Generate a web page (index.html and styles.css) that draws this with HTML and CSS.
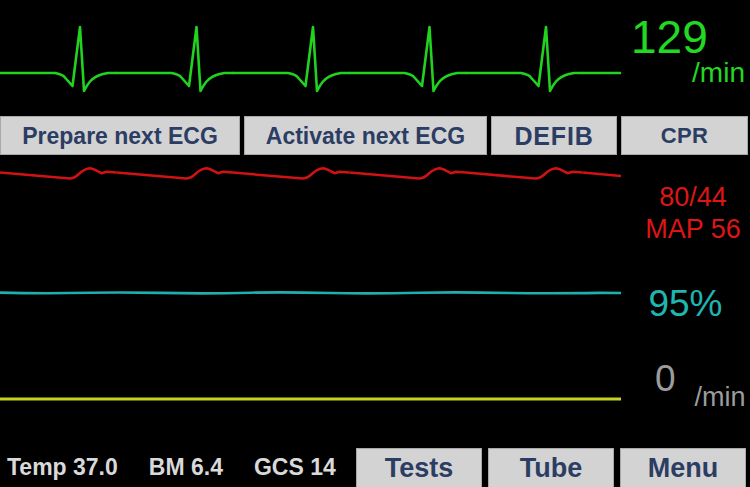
FILE: index.html
```html
<!DOCTYPE html>
<html>
<head>
<meta charset="utf-8">
<link rel="stylesheet" href="styles.css">
</head>
<body>
<div class="monitor">
  <section class="row ecg-row">
    <svg class="trace" width="621" height="116" viewBox="0 0 621 116">
      <defs>
        <path id="beat" d="M0,73 H55 Q62,74.5 64,76.5 L72.5,86 L80,27 L84,91 Q87,85 90,81.5 Q95,76 103,74 L108,73 H116.5"/>
      </defs>
      <g class="ecg-line">
        <use href="#beat" x="0"/>
        <use href="#beat" x="116.5"/>
        <use href="#beat" x="233"/>
        <use href="#beat" x="349.5"/>
        <use href="#beat" x="466"/>
        <use href="#beat" x="582.5"/>
      </g>
    </svg>
    <div class="val hr-val">
      <span class="hr-num">129</span>
      <span class="hr-unit">/min</span>
    </div>
  </section>

  <nav class="btn-row">
    <button class="btn btn-ecg">Prepare next ECG</button>
    <button class="btn btn-ecg">Activate next ECG</button>
    <button class="btn btn-defib">DEFIB</button>
    <button class="btn btn-cpr">CPR</button>
  </nav>

  <section class="row bp-row">
    <svg class="trace" width="621" height="104" viewBox="0 154 621 104">
      <defs>
        <path id="pulse" d="M0,172.6 L70,178.6 Q75,178 80,173 Q85,168.5 90,168.2 Q94,168.8 101.5,173.2 L106.5,171.7 L116.5,172.6"/>
      </defs>
      <g class="bp-line">
        <use href="#pulse" x="0"/>
        <use href="#pulse" x="116.5"/>
        <use href="#pulse" x="233"/>
        <use href="#pulse" x="349.5"/>
        <use href="#pulse" x="466"/>
        <use href="#pulse" x="582.5"/>
      </g>
    </svg>
    <div class="val bp-val">
      <span class="bp-line1">80/44</span>
      <span class="bp-line2">MAP 56</span>
    </div>
  </section>

  <section class="row spo2-row">
    <svg class="trace" width="621" height="82" viewBox="0 258 621 82">
      <path class="spo2-line" d="M0,292.6 C30,293.4 60,293.4 90,292.8 C110,292.3 130,292.3 160,292.9 C190,293.5 220,293.5 250,292.7 C270,292.2 300,292.3 330,293 C360,293.6 390,293.4 420,292.7 C450,292.2 480,292.4 510,293 C540,293.5 570,293.3 600,292.9 L621,293"/>
    </svg>
    <div class="val spo2-val">95%</div>
  </section>

  <section class="row resp-row">
    <svg class="trace" width="621" height="108" viewBox="0 340 621 108">
      <path class="resp-line" d="M0,399 H621"/>
    </svg>
    <div class="val resp-val">
      <span class="rr-num">0</span><span class="rr-unit">/min</span>
    </div>
  </section>

  <footer class="bottom">
    <div class="stats">
      <span class="stat">Temp 37.0</span>
      <span class="stat">BM 6.4</span>
      <span class="stat">GCS 14</span>
    </div>
    <div class="bottom-btns">
      <button class="btn btn-big">Tests</button>
      <button class="btn btn-big">Tube</button>
      <button class="btn btn-big">Menu</button>
    </div>
  </footer>
</div>
</body>
</html>
```
FILE: styles.css
```css
* { box-sizing: border-box; }
html, body {
  margin: 0;
  padding: 0;
  background: #000;
}
body {
  width: 750px;
  height: 487px;
  overflow: hidden;
  font-family: "Liberation Sans", Arial, sans-serif;
}
.monitor {
  display: flex;
  flex-direction: column;
  width: 750px;
  height: 487px;
}
.row {
  display: flex;
  flex: none;
}
.trace {
  display: block;
  flex: none;
}
.val {
  flex: 1;
  display: flex;
  flex-direction: column;
}

/* ECG */
.ecg-row { height: 116px; }
.ecg-line {
  fill: none;
  stroke: #21d21f;
  stroke-width: 2.6;
  stroke-linejoin: round;
  stroke-linecap: round;
}
.hr-val { color: #22d822; }
.hr-num {
  font-size: 46px;
  line-height: 46px;
  padding-top: 14px;
  padding-left: 10px;
}
.hr-unit {
  font-size: 28px;
  line-height: 28px;
  margin-top: -1px;
  align-self: flex-end;
  padding-right: 5px;
}

/* Buttons */
.btn-row {
  display: grid;
  grid-template-columns: 240px 243px 126px 127px;
  column-gap: 4px;
  height: 38px;
  flex: none;
}
.btn {
  margin: 0;
  padding: 0;
  background: #d3d3d3;
  border: 1px solid #a8a8a8;
  color: #2c3d64;
  font-family: "Liberation Sans", Arial, sans-serif;
  font-weight: bold;
  text-align: center;
}
.btn-ecg { font-size: 23px; line-height: 36px; padding-top: 1px; }
.btn-defib { font-size: 25px; line-height: 36px; letter-spacing: 0.8px; }
.btn-cpr { font-size: 22px; line-height: 36px; letter-spacing: 0.3px; }

/* BP */
.bp-row { height: 104px; }
.bp-line {
  fill: none;
  stroke: #d01212;
  stroke-width: 2.5;
  stroke-linejoin: round;
}
.bp-val {
  color: #de1515;
  font-size: 27px;
  line-height: 32px;
  align-items: center;
  padding-top: 27px;
  padding-left: 15px;
}

/* SpO2 */
.spo2-row { height: 82px; }
.spo2-line {
  fill: none;
  stroke: #1fb0ad;
  stroke-width: 2.6;
}
.spo2-val {
  color: #1fb5b0;
  font-size: 37px;
  line-height: 36px;
  padding-top: 28px;
  align-items: center;
}

/* Resp */
.resp-row { height: 108px; }
.resp-line {
  fill: none;
  stroke: #c6d21e;
  stroke-width: 3;
}
.resp-val {
  flex-direction: row;
  align-items: baseline;
  color: #9c9c9c;
  padding-top: 21px;
  padding-left: 34px;
}
.rr-num {
  font-size: 37px;
  line-height: 36px;
}
.rr-unit {
  font-size: 27px;
  line-height: 26px;
  margin-left: 19px;
  position: relative;
  top: 15px;
}

/* Bottom bar */
.bottom {
  display: flex;
  height: 39px;
  margin-top: 0;
  flex: none;
}
.stats {
  display: flex;
  column-gap: 31px;
  padding-left: 7px;
  color: #d9d9d9;
  font-weight: bold;
  font-size: 23px;
  line-height: 39px;
}
.bottom-btns {
  margin-left: auto;
  display: grid;
  grid-template-columns: repeat(3, 126px);
  column-gap: 6px;
  padding-right: 4px;
}
.btn-big {
  font-size: 27px;
  line-height: 39px;
  border-bottom: none;
}
```
